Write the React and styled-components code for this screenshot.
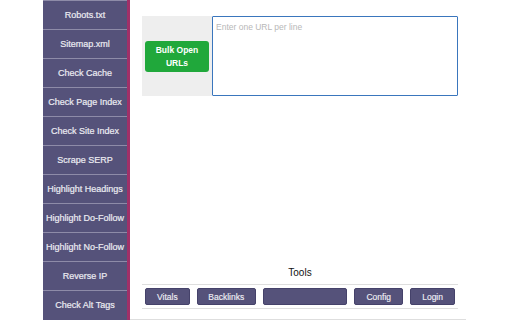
import React from 'react';
import styled, { createGlobalStyle } from 'styled-components';

const purple = '#55527a';
const pink = '#a03068';
const rule = '#dedede';

const GlobalStyle = createGlobalStyle`
  html, body {
    margin: 0;
    padding: 0;
    background: #fff;
    font-family: "Liberation Sans", Arial, sans-serif;
  }
`;

const Page = styled.div`
  display: flex;
  height: 320px;
  width: 512px;
  overflow: hidden;
  padding-left: 43px;
  box-sizing: border-box;
`;

const Sidebar = styled.nav`
  width: 84px;
  flex-shrink: 0;
  background: ${purple};
  border-right: 3px solid ${pink};
  display: flex;
  flex-direction: column;
`;

const NavItem = styled.div`
  height: 28px;
  flex-shrink: 0;
  border-top: 1px solid #8e8ba8;
  color: #ececf2;
  font-size: 9px;
  -webkit-text-stroke: 0.2px #ececf2;
  display: flex;
  align-items: center;
  justify-content: center;
  white-space: nowrap;
`;

const Main = styled.main`
  width: 336px;
  display: flex;
  flex-direction: column;
  padding-top: 16px;
  box-sizing: border-box;
`;

const Content = styled.div`
  padding-left: 12px;
  padding-right: 8px;
`;

const Panel = styled.div`
  display: flex;
  height: 80px;
`;

const ActionCell = styled.div`
  width: 70px;
  background: #eeeeee;
  display: flex;
  align-items: center;
  justify-content: center;
`;

const GreenButton = styled.button`
  width: 64px;
  height: 31px;
  border: none;
  border-radius: 3px;
  background: #20a83b;
  color: #fff;
  font-family: inherit;
  font-weight: bold;
  font-size: 8.5px;
  line-height: 13px;
  padding: 0;
  margin-top: 1px;
`;

const UrlBox = styled.textarea`
  width: 246px;
  height: 80px;
  box-sizing: border-box;
  border: 1.5px solid #3a76bd;
  border-radius: 1px;
  resize: none;
  padding: 5px 3px;
  font-family: inherit;
  font-size: 8.5px;
  outline: none;
  &::placeholder { color: #b8b8b8; }
`;

const Tools = styled.section`
  margin-top: auto;
`;

const ToolsTitle = styled.div`
  text-align: center;
  font-size: 10px;
  line-height: 14px;
  color: #111;
  margin-bottom: 4px;
`;

const ToolRow = styled.div`
  display: flex;
  gap: 7px;
  padding: 3px 3px;
  border-top: 1px solid ${rule};
  border-bottom: 1px solid ${rule};
`;

const ToolButton = styled.button`
  width: ${(p) => p.w}px;
  height: 17px;
  padding: 0;
  border: 1px solid #45426a;
  border-radius: 2px;
  background: ${purple};
  color: #eeeef4;
  font-family: inherit;
  font-size: 8.5px;
  -webkit-text-stroke: 0.15px #eeeef4;
`;

const Divider = styled.div`
  height: 1px;
  background: ${rule};
  margin-top: 10px;
`;

const navItems = [
  'Robots.txt',
  'Sitemap.xml',
  'Check Cache',
  'Check Page Index',
  'Check Site Index',
  'Scrape SERP',
  'Highlight Headings',
  'Highlight Do-Follow',
  'Highlight No-Follow',
  'Reverse IP',
  'Check Alt Tags',
];

const tools = [
  { label: 'Vitals', w: 45 },
  { label: 'Backlinks', w: 59 },
  { label: '', w: 85 },
  { label: 'Config', w: 49 },
  { label: 'Login', w: 45 },
];

const App = () => (
  <>
    <GlobalStyle />
    <Page>
      <Sidebar>
        {navItems.map((item) => (
          <NavItem key={item}>{item}</NavItem>
        ))}
      </Sidebar>
      <Main>
        <Content>
          <Panel>
            <ActionCell>
              <GreenButton>Bulk Open<br />URLs</GreenButton>
            </ActionCell>
            <UrlBox placeholder="Enter one URL per line" />
          </Panel>
        </Content>
        <Tools>
          <Content>
            <ToolsTitle>Tools</ToolsTitle>
            <ToolRow>
              {tools.map((t, i) => (
                <ToolButton key={i} w={t.w}>{t.label}</ToolButton>
              ))}
            </ToolRow>
          </Content>
          <Divider />
        </Tools>
      </Main>
    </Page>
  </>
);

export default App;
